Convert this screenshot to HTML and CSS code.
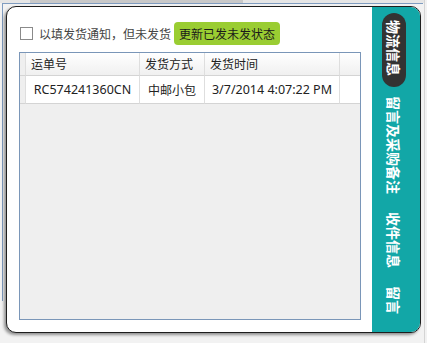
FILE: index.html
```html
<!DOCTYPE html>
<html lang="zh-CN">
<head>
    <meta charset="UTF-8">
    <meta name="viewport" content="width=device-width, initial-scale=1.0">
    <title>物流信息</title>
    <link rel="stylesheet" href="styles.css">
</head>
<body>
    <div class="desk">
        <div class="strip"><div class="strip-thumb"></div></div>
        <div class="frame">
            <div class="dialog">
                <div class="main">
                    <div class="toolbar">
                        <span class="checkbox"></span>
                        <span class="check-label">以填发货通知，但未发货</span>
                        <button class="btn-update">更新已发未发状态</button>
                    </div>

                    <div class="grid">
                        <div class="row head">
                            <div class="cell rowhead"></div>
                            <div class="cell">运单号</div>
                            <div class="cell">发货方式</div>
                            <div class="cell">发货时间</div>
                            <div class="cell filler"></div>
                        </div>
                        <div class="row data">
                            <div class="cell rowhead"></div>
                            <div class="cell">RC574241360CN</div>
                            <div class="cell">中邮小包</div>
                            <div class="cell">3/7/2014 4:07:22 PM</div>
                            <div class="cell filler"></div>
                        </div>
                    </div>
                </div>

                <div class="tabs">
                    <div class="tab active">物流信息</div>
                    <div class="tab">留言及采购备注</div>
                    <div class="tab">收件信息</div>
                    <div class="tab">留言</div>
                </div>
            </div>
        </div>
    </div>
</body>
</html>
```

FILE: styles.css
```css
html {
    background: #f2f2f2;
}
body {
    margin: 0;
    font-family: "Noto Sans", "Noto Sans CJK SC", sans-serif;
    color: #222;
}
.desk {
    width: 424px;
    height: 343px;
    border-right: 1px solid #d4d4d4;
}
.strip {
    height: 3px;
    background: #e6e6e6;
}
.strip-thumb {
    margin-left: 30px;
    width: 213px;
    height: 3px;
    background: #c9c9c9;
}
.frame {
    margin-left: 2px;
    width: 420px;
    height: 297px;
    border-top: 1px solid #7f9cc0;
    border-left: 1px solid #7f9cc0;
}
.dialog {
    margin: 2px 0 0 3px;
    width: 413px;
    height: 325px;
    display: flex;
    background: white;
    border: 1px solid #1e1e1e;
    border-radius: 10px;
    overflow: hidden;
    box-shadow: -2px 2px 3px rgba(0,0,0,0.4);
}
.main {
    flex: 1;
    display: flex;
    flex-direction: column;
    gap: 7px;
    padding: 15px 11px 12px 12px;
}
.toolbar {
    display: flex;
    align-items: center;
    height: 23px;
    font-family: "Noto Sans CJK SC", sans-serif;
    font-size: 12px;
}
.checkbox {
    width: 11px;
    height: 11px;
    margin-left: 1px;
    border: 1px solid #8a8a8a;
    background: white;
}
.check-label {
    margin-left: 6px;
    color: #444;
}
.btn-update {
    margin-left: 3px;
    height: 23px;
    padding: 0 5px;
    border: none;
    border-radius: 4px;
    background: #9acd32;
    color: #1a1a1a;
    font-family: "Noto Sans CJK SC", sans-serif;
    font-size: 12px;
}
.grid {
    flex: 1;
    border: 1px solid #7a96b8;
    background: #efefef;
}
.row {
    display: grid;
    grid-template-columns: 6px 114px 65px 135px 1fr;
}
.cell {
    border-right: 1px solid #dedede;
    border-bottom: 1px solid #d4d4d4;
    white-space: nowrap;
}
.head .cell {
    height: 22px;
    line-height: 22px;
    padding-left: 5px;
    font-family: "Noto Sans CJK SC", sans-serif;
    font-size: 12px;
    background: linear-gradient(#ffffff, #f0f0f0);
}
.data .cell {
    height: 27px;
    line-height: 27px;
    text-align: center;
    font-size: 12.5px;
    background: white;
}
.data .cell:nth-child(3) {
    font-family: "Noto Sans CJK SC", sans-serif;
    font-size: 12px;
}
.cell.rowhead {
    padding-left: 0;
    background: #efefef;
}
.head .cell.rowhead {
    background: #efefef;
}
.cell.filler {
    border-right: none;
}
.tabs {
    width: 48px;
    display: flex;
    flex-direction: column;
    gap: 2px;
    padding: 6px 0 0 10px;
    box-sizing: border-box;
    background: #12a7a7;
}
.tab {
    width: 24px;
    padding: 7px 0 9px;
    writing-mode: vertical-rl;
    text-orientation: sideways;
    line-height: 24px;
    font-family: "Noto Sans CJK SC", sans-serif;
    font-size: 14px;
    font-weight: bold;
    color: white;
    border-radius: 12px;
}
.tab.active {
    padding-bottom: 11px;
    background: #333;
}
```
